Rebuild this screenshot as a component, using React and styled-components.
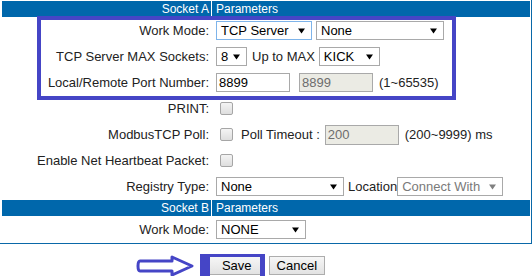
import React from "react";
import styled, { createGlobalStyle } from "styled-components";

const GlobalStyle = createGlobalStyle`
  body {
    margin: 0;
    background: #fff;
    font-family: "Liberation Sans", Arial, sans-serif;
    font-size: 13px;
    color: #222;
  }
`;

const Page = styled.div`
  position: relative;
  width: 532px;
  height: 276px;
  overflow: hidden;
`;

const Panel = styled.div`
  width: 532px;
  box-sizing: border-box;
  padding: 1px 1px 1px 2px;
  border-right: 1px solid #0a68a8;
  border-bottom: 1px solid #0a68a8;
  display: flex;
  flex-direction: column;
  gap: 1px;
`;

const HeaderRow = styled.div`
  display: grid;
  grid-template-columns: 209px 1fr;
  column-gap: 1px;
  height: 16px;
`;

const HeaderCell = styled.div`
  background: #0067ab;
  color: #fff;
  font-size: 12px;
  line-height: 16px;
  text-align: ${({ $right }) => ($right ? "right" : "left")};
  padding: ${({ $right }) => ($right ? "0 2px 0 0" : "0 0 0 4px")};
`;

const Row = styled.div`
  display: grid;
  grid-template-columns: 209px 1fr;
  column-gap: 1px;
  height: 25px;
  align-items: center;
`;

const Label = styled.div`
  text-align: right;
  padding-right: 2px;
  white-space: nowrap;
`;

const Field = styled.div`
  display: flex;
  align-items: center;
  padding-left: 4px;
  white-space: nowrap;
`;

const SelectBox = styled.div`
  display: inline-flex;
  align-items: center;
  justify-content: space-between;
  box-sizing: border-box;
  width: ${({ $w }) => $w}px;
  height: 19px;
  margin-right: ${({ $mr }) => $mr || 0}px;
  border: 1px solid ${({ $focus }) => ($focus ? "#7eb4ea" : "#a9a9a9")};
  background: #fff;
  padding: 0 6px 0 4px;
  font-size: 13px;
  color: ${({ $disabled }) => ($disabled ? "#7a7a7a" : "#000")};
`;

const Input = styled.div`
  box-sizing: border-box;
  width: 74px;
  height: ${({ $h }) => $h || 19}px;
  margin-right: ${({ $mr }) => $mr || 0}px;
  border: 1px solid #a9a9a9;
  background: ${({ $disabled }) => ($disabled ? "#ebebe4" : "#fff")};
  color: ${({ $disabled }) => ($disabled ? "#6d6d6d" : "#000")};
  padding: 0 2px;
  line-height: ${({ $h }) => ($h || 19) - 2}px;
  font-size: 13px;
`;

const Text = styled.span`
  margin-right: ${({ $mr }) => $mr || 0}px;
  color: #222;
`;

const Check = styled.span`
  display: inline-block;
  box-sizing: border-box;
  width: 13px;
  height: 13px;
  margin: 0 ${({ $mr }) => $mr || 0}px 0 4px;
  border: 1px solid #a6a6a6;
  border-radius: 2px;
  background: linear-gradient(#f4f4f4, #dedede);
`;

const ButtonBar = styled.div`
  display: flex;
  justify-content: center;
  gap: 4px;
  margin-top: 12px;
  padding-left: 2px;
`;

const Button = styled.div`
  box-sizing: border-box;
  height: 19px;
  padding: 0 ${({ $px }) => $px}px;
  border: 1px solid #adadad;
  background: linear-gradient(#f6f6f6, #e2e2e2);
  color: #000;
  font-size: 13px;
  line-height: 17px;
`;

const Mark = styled.div`
  position: absolute;
  left: ${({ $x }) => $x}px;
  top: ${({ $y }) => $y}px;
  width: ${({ $w }) => $w}px;
  height: ${({ $h }) => $h}px;
  box-sizing: border-box;
  border: solid #4545c6;
  border-width: ${({ $bw }) => $bw};
  pointer-events: none;
`;

const ArrowMark = styled.svg`
  position: absolute;
  left: 136px;
  top: 254px;
`;

function Caret({ gray }) {
  return (
    <svg width="7" height="6" viewBox="0 0 7 6">
      <path d="M0 0.5 H7 L3.5 5.5 Z" fill={gray ? "#808080" : "#000"} />
    </svg>
  );
}

function Select({ value, w, mr, focus, disabled }) {
  return (
    <SelectBox $w={w} $mr={mr} $focus={focus} $disabled={disabled}>
      <span>{value}</span>
      <Caret gray={disabled} />
    </SelectBox>
  );
}

export default function App() {
  return (
    <Page>
      <GlobalStyle />
      <Panel>
        <HeaderRow>
          <HeaderCell $right>Socket A</HeaderCell>
          <HeaderCell>Parameters</HeaderCell>
        </HeaderRow>

        <Row>
          <Label>Work Mode:</Label>
          <Field>
            <Select value="TCP Server" w={96} mr={4} focus />
            <Select value="None" w={128} />
          </Field>
        </Row>

        <Row>
          <Label>TCP Server MAX Sockets:</Label>
          <Field>
            <Select value="8" w={31} mr={5} />
            <Text $mr={4}>Up to MAX</Text>
            <Select value="KICK" w={61} />
          </Field>
        </Row>

        <Row>
          <Label>Local/Remote Port Number:</Label>
          <Field>
            <Input $mr={9}>8899</Input>
            <Input $disabled $mr={6}>8899</Input>
            <Text>(1~65535)</Text>
          </Field>
        </Row>

        <Row>
          <Label>PRINT:</Label>
          <Field>
            <Check />
          </Field>
        </Row>

        <Row>
          <Label>ModbusTCP Poll:</Label>
          <Field>
            <Check $mr={8} />
            <Text $mr={5}>Poll Timeout :</Text>
            <Input $disabled $h={20} $mr={6}>200</Input>
            <Text>(200~9999) ms</Text>
          </Field>
        </Row>

        <Row>
          <Label>Enable Net Heartbeat Packet:</Label>
          <Field>
            <Check />
          </Field>
        </Row>

        <Row>
          <Label>Registry Type:</Label>
          <Field>
            <Select value="None" w={128} mr={4} />
            <Text>Location</Text>
            <Select value="Connect With" w={106} disabled />
          </Field>
        </Row>

        <HeaderRow>
          <HeaderCell $right>Socket B</HeaderCell>
          <HeaderCell>Parameters</HeaderCell>
        </HeaderRow>

        <Row>
          <Label>Work Mode:</Label>
          <Field>
            <Select value="NONE" w={90} />
          </Field>
        </Row>
      </Panel>

      <ButtonBar>
        <Button $px={12}>Save</Button>
        <Button $px={7}>Cancel</Button>
      </ButtonBar>

      <Mark $x={37} $y={16} $w={419} $h={84} $bw="4px" />
      <Mark $x={200} $y={254} $w={65} $h={26} $bw="3px 5px 0 10px" />
      <ArrowMark width="60" height="24" viewBox="0 0 60 24">
        <path
          d="M4 7 H36 V3 L56 12 L36 21 V17 H4 Q2 17 2 12 Q2 7 4 7 Z"
          fill="#fff"
          stroke="#4545c6"
          strokeWidth="3"
          strokeLinejoin="round"
        />
      </ArrowMark>
    </Page>
  );
}
